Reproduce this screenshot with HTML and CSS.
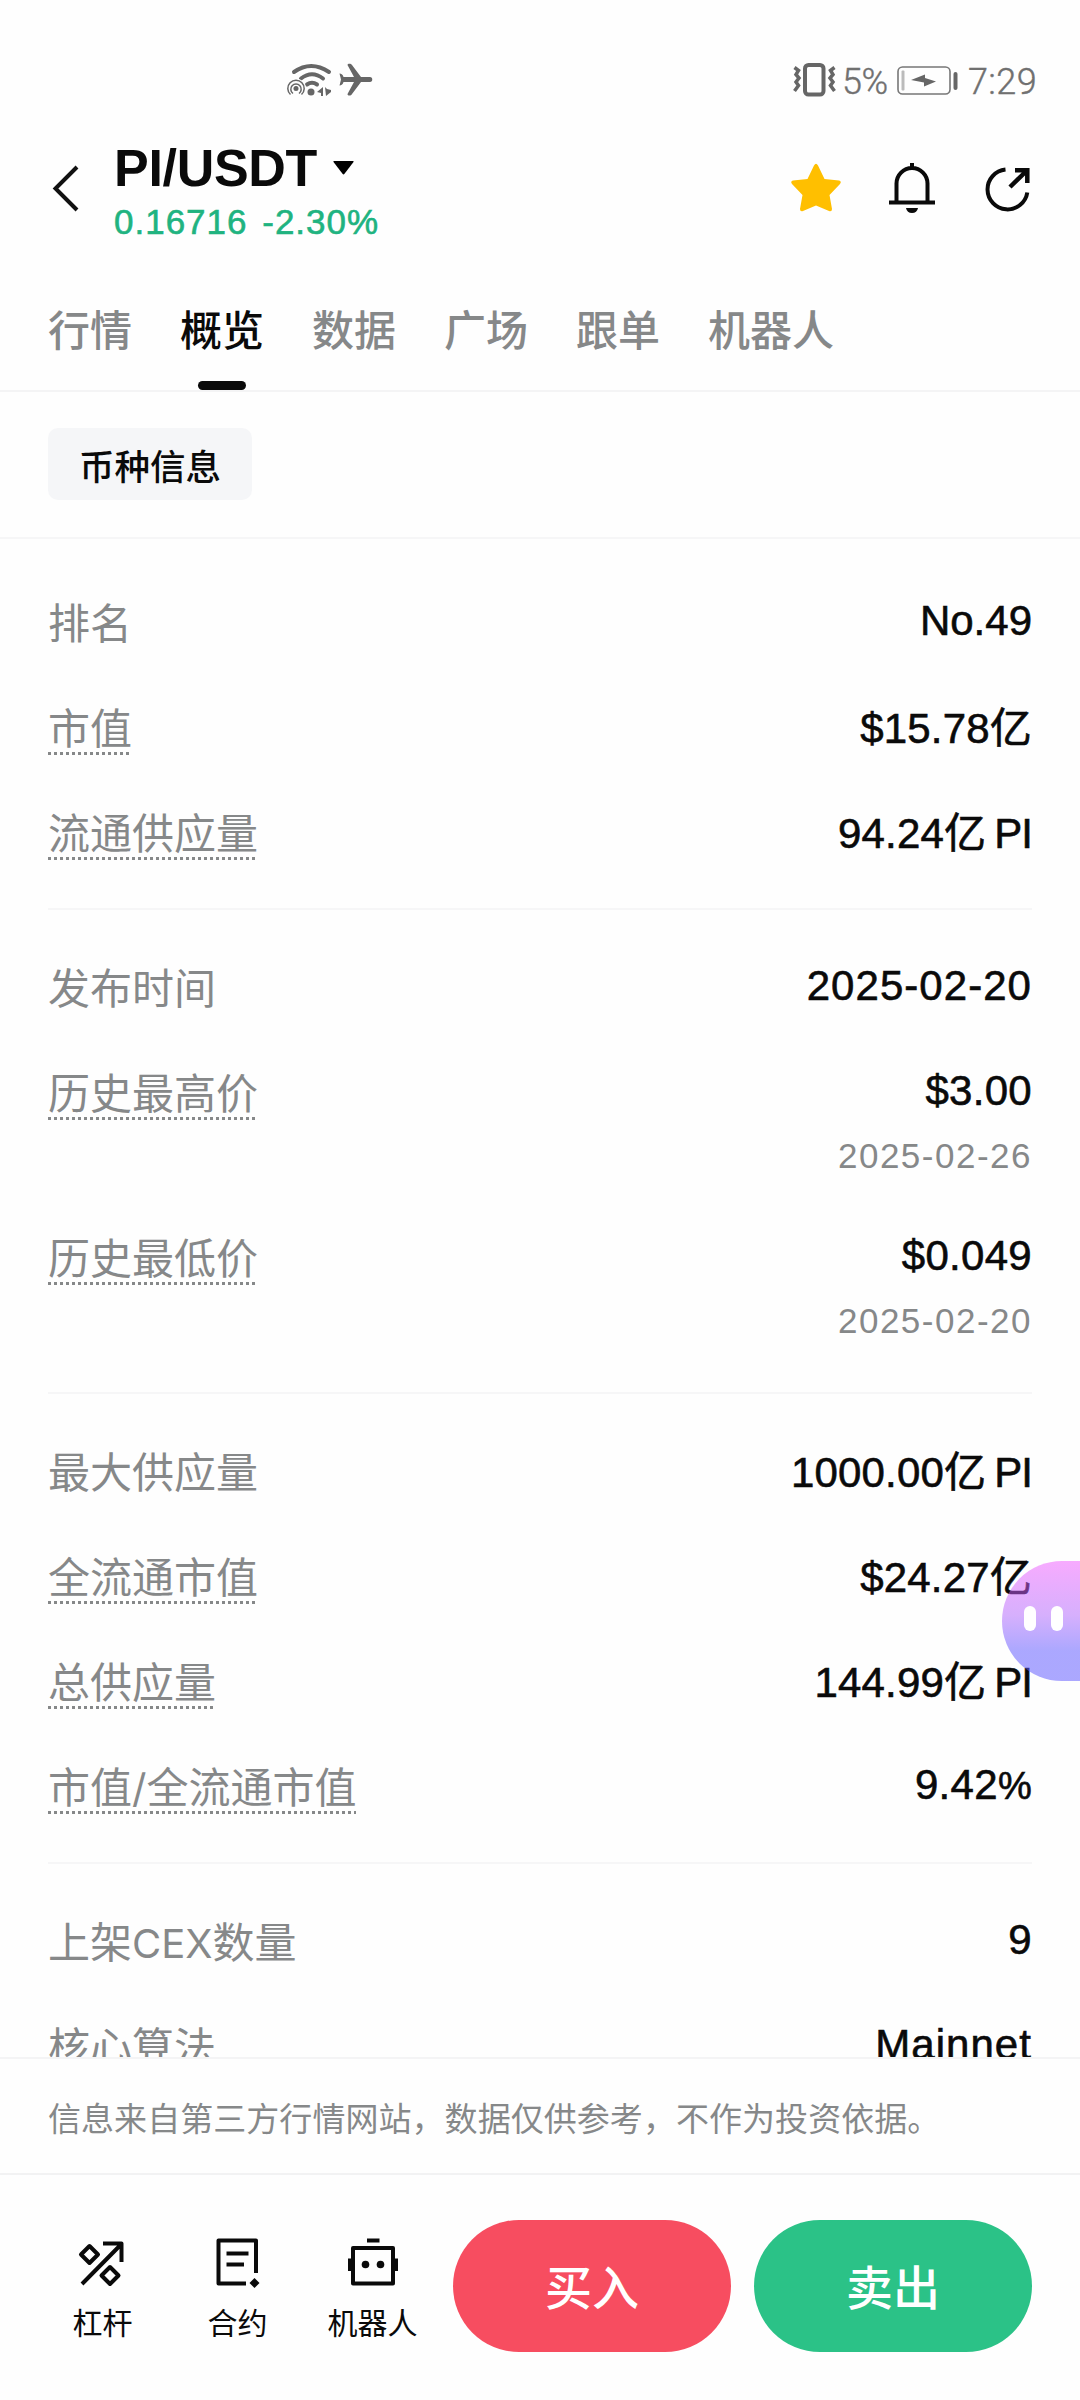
FILE: index.html
```html
<!DOCTYPE html>
<html lang="zh-CN">
<head>
<meta charset="utf-8">
<title>PI/USDT 概览</title>
<link rel="stylesheet" href="styles.css">
</head>
<body>
<div class="app">
  <div class="status">
    <svg class="wifi" width="86" height="34" viewBox="0 0 86 34">
      <g fill="none" stroke="#666" stroke-width="4" stroke-linecap="round">
        <path d="M7 9Q24 -3 42 9"/><path d="M14 15.500Q25 7 36 15.500"/><path d="M20 21.500Q25 18 30 21.500"/>
      </g>
      <circle cx="9" cy="25.500" r="10" fill="#fefefe"/>
      <circle cx="9" cy="25.500" r="2.500" fill="#666"/>
      <g fill="none" stroke="#666" stroke-width="1.500">
        <path d="M6 30.500A5.200 5.200 0 1 1 12 30.500"/><path d="M3.500 31.500A8.200 8.200 0 1 1 14.500 31.500"/>
      </g>
      <circle cx="24" cy="29" r="3.500" fill="#666"/>
      <path fill="#666" d="M30 29L36 24V33H34V30ZM38 24L40 26L44 27V29L39 33Z"/>
      <path fill="#666" d="M52.500 10.500C54.500 10.500 56 12 56.500 14H67L60.500 2C60.500 .3 64 .3 65 2L74 14H83C86 14 86 19 83 19H74L65 31C64 33 60.500 33 60.500 31L67 19H56.500C56 21 54.500 22.500 52.500 22.500L54 16.500Z"/>
    </svg>
    <div class="status-right">
      <svg width="43" height="34" viewBox="0 0 43 34" fill="none" stroke="#666">
        <rect x="12" y="2" width="18.500" height="29.500" rx="3.500" stroke-width="4"/>
        <path stroke-width="3.500" d="M1.500 4.500L5.500 7.500L3 11.500L6 15L3 19L5.500 22.500L1.500 28M41.500 4.500L37.500 7.500L40 11.500L37 15L40 19L37.500 22.500L41.500 28"/>
      </svg>
      <span class="percent">5%</span>
      <svg class="battery" width="61" height="30" viewBox="0 0 61 30">
        <rect x="1" y="1" width="52" height="27" rx="4.500" fill="none" stroke="#777" stroke-width="1.600"/>
        <rect x="4.500" y="4.500" width="3" height="20" rx="1" fill="#bbb"/>
        <path fill="#666" d="M14 14L28 8.500V12L39 15.500L27 20.500V16.500Z"/>
        <rect x="56.500" y="6" width="4" height="18" rx="2" fill="#666"/>
      </svg>
      <span class="clock">7:29</span>
    </div>
  </div>

  <header class="header">
    <svg class="back" width="30" height="48" viewBox="0 0 30 48" fill="none" stroke="#111" stroke-width="4"><path d="M26 3L4.500 24.500L26 46"/></svg>
    <div class="pair">
      <div class="pair-name">PI/USDT<svg class="caret" width="21" height="14" viewBox="0 0 21 14"><path d="M1 0H20Q21 0 20.500 1L11.500 12.800Q10.500 14 9.500 12.800L.5 1Q0 0 1 0Z"/></svg></div>
      <div class="pair-price">0.16716 <span>-2.30%</span></div>
    </div>
    <div class="actions">
      <svg width="50" height="50" viewBox="0 0 50 50"><path fill="#ffbf00" d="M23 2.500Q25 -1 27 2.500L33.500 16L48 17.500Q51 18.500 49 21L38.500 32L41 46Q41 49 38 48L25 42.500L12 48Q9 49 9 46L11.500 32L1 21Q-1 18.500 2 17.500L16.500 16Z"/></svg>
      <svg class="bell" width="46" height="50" viewBox="0 0 46 50"><g fill="none" stroke="#0a0a0a" stroke-width="4"><path d="M23 0V5M0 39.500H46M7.500 39V20.500A15.500 15.500 0 0 1 38.500 20.500V39"/></g><path fill="#0a0a0a" d="M17 45H29Q28 50 23 50Q18 50 17 45Z"/></svg>
      <svg width="46" height="50" viewBox="0 0 46 50" fill="none" stroke="#0a0a0a" stroke-width="4"><path d="M20.500 6.500A20 20 0 1 0 42.300 29.500"/><path stroke-width="4.500" d="M25 24L42 7.500M30 7.300H42.300V20"/></svg>
    </div>
  </header>

  <nav class="tabs">
    <span>行情</span><span class="active">概览</span><span>数据</span><span>广场</span><span>跟单</span><span>机器人</span>
  </nav>
  <div class="subtabs"><span class="chip">币种信息</span></div>

  <main class="info">
    <section class="group">
      <div class="row"><span class="label">排名</span><span class="value plain">No.49</span></div>
      <div class="row"><span class="label hint">市值</span><span class="value mixed">$15.78亿</span></div>
      <div class="row"><span class="label hint">流通供应量</span><span class="value mixed">94.24亿<span class="unit">PI</span></span></div>
    </section>
    <section class="group history">
      <div class="row"><span class="label">发布时间</span><span class="value wide">2025-02-20</span></div>
      <div class="row"><span class="label hint">历史最高价</span><div><div class="value">$3.00</div><div class="date">2025-02-26</div></div></div>
      <div class="row"><span class="label hint">历史最低价</span><div><div class="value">$0.049</div><div class="date">2025-02-20</div></div></div>
    </section>
    <section class="group">
      <div class="row"><span class="label">最大供应量</span><span class="value mixed">1000.00亿<span class="unit">PI</span></span></div>
      <div class="row"><span class="label hint">全流通市值</span><span class="value mixed">$24.27亿</span></div>
      <div class="row"><span class="label hint">总供应量</span><span class="value mixed">144.99亿<span class="unit">PI</span></span></div>
      <div class="row"><span class="label hint">市值<span class="latin">/</span>全流通市值</span><span class="value">9.42<span class="pct">%</span></span></div>
    </section>
    <section class="group">
      <div class="row"><span class="label">上架<span class="latin">CEX</span>数量</span><span class="value">9</span></div>
      <div class="row"><span class="label">核心算法</span><span class="value wide">Mainnet</span></div>
    </section>
  </main>

  <div class="notice">信息来自第三方行情网站，数据仅供参考，不作为投资依据。</div>

  <footer class="bar">
    <div class="tool">
      <svg width="52" height="52" viewBox="0 0 52 52" fill="none" stroke="#0a0a0a" stroke-width="4" stroke-linejoin="round"><path d="M5 47L43.500 8M26 6.500H44.500V25"/><path d="M12.500 9L21 17.500L12.500 26L4 17.500ZM33 30L41.500 38.500L33 47L24.500 38.500Z"/></svg>
      <span>杠杆</span>
    </div>
    <div class="tool">
      <svg width="52" height="52" viewBox="0 0 52 52" fill="none" stroke="#0a0a0a" stroke-width="4" stroke-linejoin="round"><path d="M34 46.500H6.500V3.500H44V36M14.500 16.500H36.500M14.500 27.500H32"/><path fill="#0a0a0a" stroke="none" d="M42.500 41L47.500 46L42.500 51L37.500 46Z"/></svg>
      <span>合约</span>
    </div>
    <div class="tool">
      <svg width="52" height="52" viewBox="0 0 52 52" fill="none" stroke="#0a0a0a" stroke-width="4" stroke-linejoin="round"><path d="M20 3.500H32.500M6 11H46V46.500H6Z"/><path d="M3 21.500V34M49 21.500V34"/><g fill="#0a0a0a" stroke="none"><circle cx="18.500" cy="27.500" r="3.800"/><circle cx="33.500" cy="27.500" r="3.800"/></g></svg>
      <span>机器人</span>
    </div>
    <div class="btn buy">买入</div>
    <div class="btn sell">卖出</div>
  </footer>

  <div class="assistant"><i></i><i></i></div>
</div>
</body>
</html>
```
FILE: styles.css
```css
* { box-sizing: border-box; }
body { margin: 0; background: #fefefe; }
svg { display: block; flex: none; overflow: visible; }
.app {
  position: relative;
  display: flex;
  flex-direction: column;
  width: 1080px;
  height: 2400px;
  overflow: hidden;
  color: #0a0a0a;
  font-family: "Noto Sans CJK SC", sans-serif;
}

.status {
  display: flex;
  justify-content: space-between;
  align-items: flex-start;
  height: 120px;
  padding: 63px 42px 0 287px;
  color: #707070;
  font: 300 36px/38px Roboto, sans-serif;
  -webkit-text-stroke: .4px #707070;
}
.status-right { display: flex; align-items: flex-start; }
.percent { margin-left: 6px; width: 55px; letter-spacing: -.5px; }
.battery { margin: 3px 10px 0 0; }
.clock { width: 70px; letter-spacing: .4px; }
.percent, .clock { white-space: nowrap; }

.header {
  display: flex;
  height: 160px;
  padding: 0 49px 0 51px;
}
.back { margin-top: 44px; }
.pair { margin-left: 32px; padding-top: 18px; font-family: "Liberation Sans", sans-serif; }
.pair-name {
  display: flex;
  align-items: center;
  gap: 16px;
  height: 60px;
  padding-left: 1px;
  font-size: 52px;
  font-weight: 700;
  line-height: 60px;
  letter-spacing: -.3px;
}
.caret { margin-top: -1px; }
.pair-price {
  height: 40px;
  margin: 4px 0 0 1px;
  color: #20b380;
  font-size: 35px;
  line-height: 40px;
  letter-spacing: 1px;
  -webkit-text-stroke: .6px #20b380;
}
.pair-price span { margin-left: 4px; }
.actions { display: flex; gap: 49px; margin: 43px 0 0 auto; }
.bell { margin: 0 1px 0 -1px; }

.tabs {
  display: flex;
  gap: 48px;
  height: 112px;
  padding: 18px 48px 0;
  border-bottom: 2px solid #f4f4f5;
  color: #868889;
  font-size: 42px;
  font-weight: 500;
  line-height: 60px;
}
.active { position: relative; color: #0a0a0a; }
.active::after {
  content: "";
  position: absolute;
  left: 18px;
  top: 83px;
  width: 48px;
  height: 9px;
  border-radius: 4.5px;
  background: #0a0a0a;
}
.subtabs { height: 147px; padding: 36px 48px; border-bottom: 2px solid #f6f6f7; }
.chip {
  display: flex;
  justify-content: center;
  width: 204px;
  height: 72px;
  border-radius: 10px;
  background: #f5f6f8;
  font-size: 35.5px;
  font-weight: 500;
  line-height: 74px;
}

.info { flex: none; height: 1518px; overflow: hidden; padding: 6px 48px 0; }
.group { padding: 46px 0 47px; border-bottom: 2px solid #f6f6f7; }
.history { padding-bottom: 46px; }
.row { display: flex; justify-content: space-between; align-items: flex-start; min-height: 60px; }
.row + .row { margin-top: 45px; }
.label { height: 60px; color: #868889; font-size: 42px; line-height: 60px; }
.hint { background: repeating-linear-gradient(90deg, #868889 0 3px, transparent 3px 6px) 0 56px / 100% 3px no-repeat; }
.latin { font-family: Inter, sans-serif; font-size: 40px; }
.value {
  height: 60px;
  font-family: "Liberation Sans", "Noto Sans CJK SC", sans-serif;
  font-size: 42px;
  line-height: 60px;
  letter-spacing: .3px;
  text-align: right;
  -webkit-text-stroke: .6px #0a0a0a;
}
.plain { letter-spacing: 0; }
.wide { letter-spacing: 1.05px; }
.mixed { padding-top: 3px; letter-spacing: .2px; }
.unit { margin-left: 8px; letter-spacing: -1px; }
.pct { font-size: 38px; }
.date {
  height: 49px;
  margin-top: 11px;
  color: #868889;
  font: 35px/48px "Liberation Sans", sans-serif;
  letter-spacing: 1.5px;
}

.notice {
  height: 116px;
  border-top: 2px solid #f4f4f5;
  padding-left: 48px;
  color: #868889;
  font-size: 33px;
  line-height: 117px;
  letter-spacing: .05px;
}
.bar {
  display: flex;
  flex: 1;
  align-items: flex-start;
  padding: 45px 48px 0 35px;
  border-top: 2px solid #f2f2f3;
}
.tool { display: flex; flex-direction: column; align-items: center; width: 135px; padding-top: 17px; font-size: 30px; line-height: 40px; }
.tool span { margin-top: 12px; }
.btn { width: 278px; height: 132px; border-radius: 66px; color: #fff; font-size: 47px; font-weight: 500; line-height: 129px; text-align: center; }
.buy { margin-left: 13px; background: #f74d60; }
.sell { margin-left: auto; background: #2bc287; }

.assistant {
  position: absolute;
  left: 1002px;
  top: 1561px;
  display: flex;
  gap: 15px;
  width: 78px;
  height: 120px;
  padding: 45px 0 0 22px;
  border-radius: 60px 0 0 60px;
  background: linear-gradient(rgba(240, 88, 255, .5), rgba(175, 98, 252, .5) 45%, rgba(95, 88, 255, .52) 75%, rgba(95, 88, 255, .52));
}
.assistant i { width: 12px; height: 25px; border-radius: 6px; background: #fff; }
```
